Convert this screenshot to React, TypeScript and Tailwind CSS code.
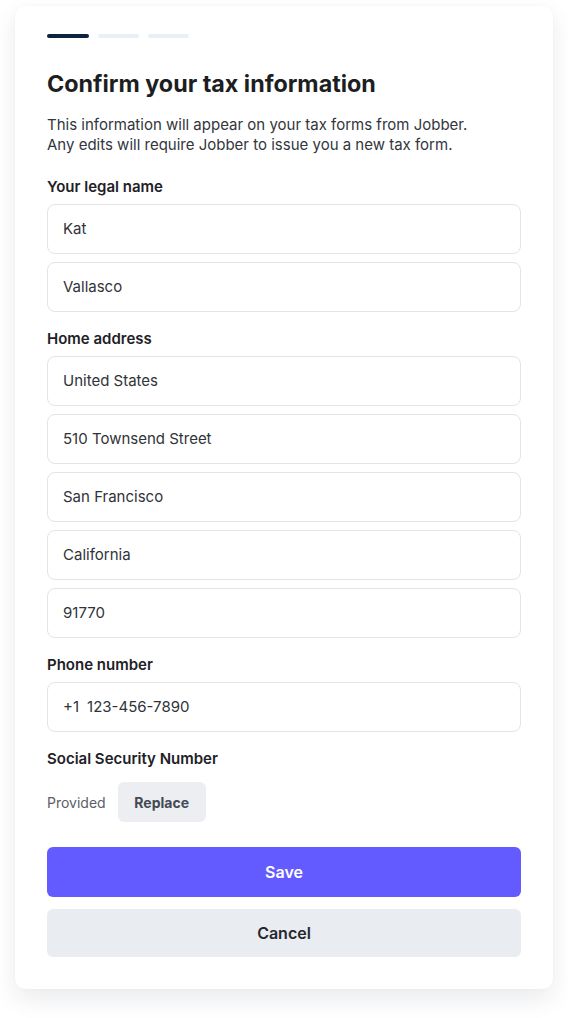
import React from "react";

const font = { fontFamily: "Inter, 'Noto Sans', sans-serif" };

function Field({ value }: { value: string }) {
  return (
    <div className="flex h-[50px] items-center rounded-[8px] border border-[#e1e4e8] bg-white px-[15px] text-[15px] text-[#303338]">
      {value}
    </div>
  );
}

function Label({ children, className = "" }: { children: React.ReactNode; className?: string }) {
  return (
    <div className={`text-[15px] font-semibold leading-[20px] text-[#1e2126] ${className}`}>
      {children}
    </div>
  );
}

export default function App() {
  return (
    <div className="min-h-[1018px] bg-white px-[15px] pt-[6px]" style={font}>
      <div className="rounded-[10px] bg-white px-[32px] pb-[32px] pt-[28px] shadow-[0_10px_24px_rgba(20,30,50,0.09),0_0_3px_rgba(20,30,50,0.04)]">
        <div className="flex gap-[9px]">
          <div className="h-[4px] w-[42px] rounded-full bg-[#0d2340]" />
          <div className="h-[4px] w-[41px] rounded-full bg-[#e9eff6]" />
          <div className="h-[4px] w-[41px] rounded-full bg-[#e9eff6]" />
        </div>
        <h1 className="mt-[30px] text-[23.3px] font-bold leading-[32px] text-[#1c1e22]">
          Confirm your tax information
        </h1>
        <p className="mt-[15px] text-[15px] leading-[20px] text-[#32363c]">
          This information will appear on your tax forms from Jobber.
          <br />
          Any edits will require Jobber to issue you a new tax form.
        </p>

        <Label className="mt-[22px]">Your legal name</Label>
        <div className="mt-[7px] flex flex-col gap-[8px]">
          <Field value="Kat" />
          <Field value="Vallasco" />
        </div>

        <Label className="mt-[17px]">Home address</Label>
        <div className="mt-[7px] flex flex-col gap-[8px]">
          <Field value="United States" />
          <Field value="510 Townsend Street" />
          <Field value="San Francisco" />
          <Field value="California" />
          <Field value="91770" />
        </div>

        <Label className="mt-[17px]">Phone number</Label>
        <div className="mt-[7px]">
          <div className="flex h-[50px] items-center gap-[8px] rounded-[8px] border border-[#e1e4e8] bg-white px-[15px] text-[15px] text-[#303338]">
            <span>+1</span>
            <span>123-456-7890</span>
          </div>
        </div>

        <Label className="mt-[17px]">Social Security Number</Label>
        <div className="mt-[13px] flex items-center gap-[12px]">
          <span className="text-[14px] text-[#5b6068]">Provided</span>
          <button className="h-[40px] w-[88px] rounded-[6px] bg-[#eceef1] text-[14px] font-bold text-[#434a55]">
            Replace
          </button>
        </div>

        <button className="mt-[25px] flex h-[50px] w-full items-center justify-center rounded-[6px] bg-[#635bff] text-[16px] font-semibold text-white">
          Save
        </button>
        <button className="mt-[12px] flex h-[48px] w-full items-center justify-center rounded-[6px] bg-[#e9ecf0] text-[16px] font-semibold text-[#25292e]">
          Cancel
        </button>
      </div>
    </div>
  );
}
